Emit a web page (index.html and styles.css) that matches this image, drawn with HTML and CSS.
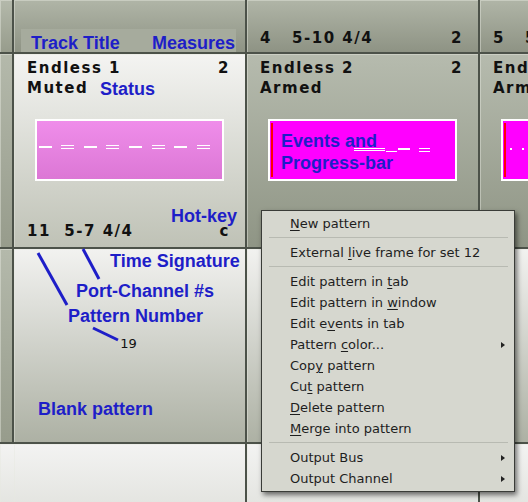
FILE: index.html
```html
<!DOCTYPE html>
<html>
<head>
<meta charset="utf-8">
<link rel="stylesheet" href="styles.css">
</head>
<body>
<div class="grid">
  <!-- row 0 -->
  <div class="cell side"></div>
  <div class="cell top"></div>
  <div class="cell top">
    <div class="row"><span>4   5-10 4/4</span><span>2</span></div>
  </div>
  <div class="cell top edge">
    <div class="row"><span>5   5-11 4/4</span></div>
  </div>

  <!-- row 1 -->
  <div class="cell side"></div>
  <div class="cell muted">
    <div class="row"><span>Endless 1</span><span>2</span></div>
    <div class="row"><span>Muted</span></div>
    <div class="box pink">
      <svg class="ev" width="185" height="58" viewBox="0 0 185 58">
        <g fill="#fff">
          <rect x="2" y="25" width="13" height="2"/>
          <rect x="24" y="24" width="13" height="1"/><rect x="24" y="27" width="13" height="1"/>
          <rect x="47" y="25" width="13" height="2"/>
          <rect x="69" y="24" width="13" height="1"/><rect x="69" y="27" width="13" height="1"/>
          <rect x="92" y="25" width="13" height="2"/>
          <rect x="115" y="24" width="13" height="1"/><rect x="115" y="27" width="13" height="1"/>
          <rect x="137" y="25" width="13" height="2"/>
          <rect x="160" y="24" width="13" height="1"/><rect x="160" y="27" width="13" height="1"/>
        </g>
      </svg>
    </div>
    <div class="row foot"><span>11  5-7 4/4</span><span>c</span></div>
  </div>
  <div class="cell armed">
    <div class="row"><span>Endless 2</span><span>2</span></div>
    <div class="row"><span>Armed</span></div>
    <div class="box magenta">
      <svg class="ev" width="185" height="58" viewBox="0 0 185 58">
        <rect x="1" y="2" width="2" height="54" fill="#f00"/>
        <g fill="#fff">
          <rect x="84" y="27" width="31" height="1"/><rect x="84" y="29" width="31" height="1"/>
          <rect x="116" y="30" width="11" height="1"/>
          <rect x="128" y="27" width="12" height="2"/>
          <rect x="149" y="27" width="11" height="1"/><rect x="149" y="30" width="11" height="1"/>
        </g>
      </svg>
    </div>
  </div>
  <div class="cell armed edge">
    <div class="row"><span>Endless 3</span></div>
    <div class="row"><span>Armed</span></div>
    <div class="box magenta">
      <svg class="ev" width="185" height="58" viewBox="0 0 185 58">
        <rect x="1" y="2" width="2" height="54" fill="#f00"/>
        <g fill="#fff">
          <rect x="7" y="27" width="2" height="2"/>
          <rect x="19" y="27" width="2" height="2"/>
        </g>
      </svg>
    </div>
  </div>

  <!-- row 2 -->
  <div class="cell side"></div>
  <div class="cell blank"><div class="pnum">19</div></div>
  <div class="cell blank"></div>
  <div class="cell blank"></div>

  <!-- row 3 -->
  <div class="cell light"></div>
  <div class="cell light"></div>
  <div class="cell light"></div>
  <div class="cell light"></div>
</div>

<div class="band"></div>
<svg class="leaders" width="528" height="502" viewBox="0 0 528 502">
  <g stroke="#1e1ec8" stroke-width="3">
    <line x1="38" y1="253" x2="67" y2="305"/>
    <line x1="83" y1="249" x2="99" y2="279"/>
    <line x1="93" y1="328" x2="118" y2="340"/>
  </g>
</svg>
<div class="note n-title">Track Title</div>
<div class="note n-measures">Measures</div>
<div class="note n-status">Status</div>
<div class="note n-hotkey">Hot-key</div>
<div class="note n-events">Events and<br>Progress-bar</div>
<div class="note n-time">Time Signature</div>
<div class="note n-port">Port-Channel #s</div>
<div class="note n-pnum">Pattern Number</div>
<div class="note n-blank">Blank pattern</div>

<div class="menu">
  <div class="mi"><span><u>N</u>ew pattern</span></div>
  <div class="sep"></div>
  <div class="mi"><span>External <u>l</u>ive frame for set 12</span></div>
  <div class="sep"></div>
  <div class="mi"><span>Edit pattern in <u>t</u>ab</span></div>
  <div class="mi"><span>Edit pattern in <u>w</u>indow</span></div>
  <div class="mi"><span>Edit e<u>v</u>ents in tab</span></div>
  <div class="mi"><span>Pattern <u>c</u>olor...</span><i class="arrow"></i></div>
  <div class="mi"><span>Cop<u>y</u> pattern</span></div>
  <div class="mi"><span>Cu<u>t</u> pattern</span></div>
  <div class="mi"><span><u>D</u>elete pattern</span></div>
  <div class="mi"><span><u>M</u>erge into pattern</span></div>
  <div class="sep"></div>
  <div class="mi"><span>Output Bus</span><i class="arrow"></i></div>
  <div class="mi"><span>Output Channel</span><i class="arrow"></i></div>
</div>
</body>
</html>
```
FILE: styles.css
```css
html, body {
  margin: 0;
  padding: 0;
}
body {
  width: 528px;
  height: 502px;
  overflow: hidden;
  position: relative;
  background: #4c5249;
  font-family: "DejaVu Sans", sans-serif;
}
.grid {
  display: grid;
  grid-template-columns: 12px 231px 231px 48px;
  grid-template-rows: 52px 193px 193px 58px;
  gap: 2px;
  width: 528px;
  height: 502px;
  background: #4c5249;
}
.cell {
  box-sizing: border-box;
  padding: 4px 15px 0 13px;
  display: flex;
  flex-direction: column;
  overflow: hidden;
  font-weight: bold;
  font-size: 15px;
  letter-spacing: 1.5px;
  line-height: 20px;
  color: #111;
  box-shadow: inset 1px 1px 0 rgba(230, 232, 224, 0.45);
}
.edge { padding-right: 0; }
.side { padding: 0; background: linear-gradient(#b4b9ab, #979c8c); }
.top { padding-top: 28px; background: linear-gradient(#b0b5a7, #8e9384); }
.armed { background: linear-gradient(#b6bbae, #8f9585); }
.muted { background: linear-gradient(#f4f4f2, #bfc2b6); }
.blank { background: linear-gradient(#f2f2f0, #adb1a4); }
.light {
  background: linear-gradient(#f3f3f2, #c2c5ba);
  background-size: 100% 193px;
  background-repeat: no-repeat;
}
.grid .side.light { background: linear-gradient(#f0f0ee, #e2e3de); }

.row {
  display: flex;
  justify-content: space-between;
  white-space: pre;
}
.foot { margin-top: 40px; }
.box {
  flex-shrink: 0;
  margin: 21px 0 0 8px;
  width: 189px;
  height: 62px;
  box-sizing: border-box;
  border: 2px solid #fff;
  overflow: hidden;
}
.pink { background: linear-gradient(#ef8dea, #dc77d5); }
.magenta { background: #ff00ff; }
.ev { display: block; }
.pnum {
  align-self: center;
  margin-top: 84px;
  font-weight: normal;
  font-size: 13px;
  line-height: 13px;
  letter-spacing: 0;
  color: #111;
}

.band {
  position: absolute;
  left: 21px;
  top: 29px;
  width: 215px;
  height: 23px;
  background: #a6ab9d;
}
.leaders {
  position: absolute;
  left: 0;
  top: 0;
  pointer-events: none;
}
.note {
  position: absolute;
  font-family: "Liberation Sans", Arial, sans-serif;
  font-weight: bold;
  font-size: 18px;
  line-height: 18px;
  color: #1e1ec8;
  white-space: nowrap;
}
.n-title { left: 31px; top: 34px; }
.n-measures { left: 152px; top: 34px; }
.n-status { left: 100px; top: 80px; }
.n-hotkey { left: 171px; top: 207px; }
.n-events { left: 281px; top: 130px; line-height: 22px; }
.n-time { left: 110px; top: 252px; }
.n-port { left: 76px; top: 282px; }
.n-pnum { left: 68px; top: 307px; }
.n-blank { left: 38px; top: 400px; }

.menu {
  position: absolute;
  left: 261px;
  top: 210px;
  width: 254px;
  box-sizing: border-box;
  border: 1px solid #3a3c38;
  background: #d6d7cf;
  padding: 2px 0;
  box-shadow: 2px 3px 5px rgba(0, 0, 0, 0.55);
  font-family: "DejaVu Sans", sans-serif;
  font-size: 13px;
  color: #1e1e1e;
}
.mi {
  height: 21px;
  line-height: 21px;
  padding: 0 9px 0 28px;
  display: flex;
  justify-content: space-between;
  align-items: center;
  white-space: nowrap;
}
.mi u {
  text-decoration-thickness: 1px;
  text-underline-offset: 2px;
}
.sep {
  height: 1px;
  background: #b8bab2;
  margin: 3px 6px 4px 7px;
}
.arrow {
  display: block;
  width: 0;
  height: 0;
  border-left: 4px solid #222;
  border-top: 3px solid transparent;
  border-bottom: 3px solid transparent;
}
```
